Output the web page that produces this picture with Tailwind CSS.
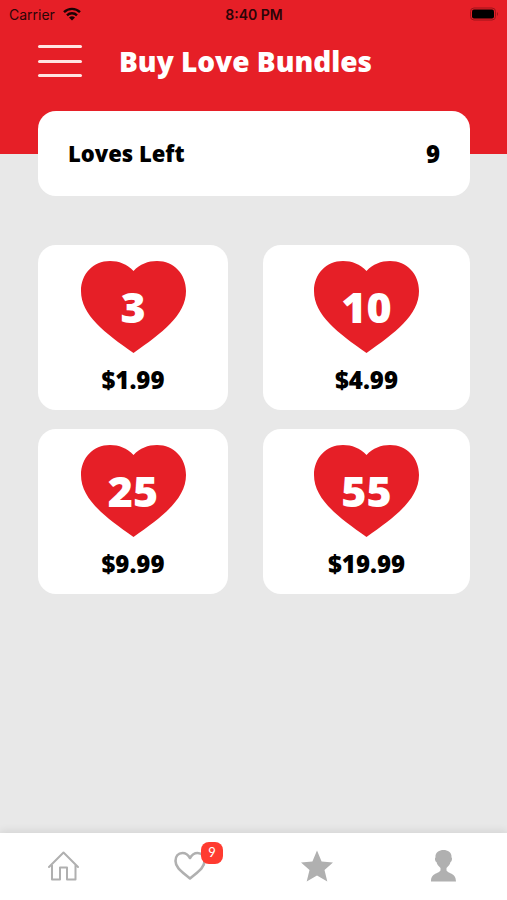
<!DOCTYPE html>
<html lang="en">
<head>
<meta charset="utf-8">
<meta name="viewport" content="width=device-width, initial-scale=1">
<title>Buy Love Bundles</title>
<script src="https://cdn.jsdelivr.net/npm/@tailwindcss/browser@4"></script>
</head>
<body class="flex min-h-screen flex-col bg-[#e8e8e8] font-['Open_Sans',sans-serif] font-extrabold text-black">
  <svg class="hidden" aria-hidden="true">
    <symbol id="heart" viewBox="0 0 105 92">
      <path d="M52.5 10C46 3 38 0 29 0C12 0 0 13 0 30C0 54 24 72 52.5 92C81 72 105 54 105 30C105 13 93 0 76 0C67 0 59 3 52.5 10Z" fill="#e61f27"/>
    </symbol>
  </svg>

  <header class="bg-[#e61f27] pb-[68px]">
    <div class="grid h-7 grid-cols-3 items-center pr-2 pl-[9px] font-['Inter',sans-serif] text-[14px] font-semibold text-[#2a0507]">
      <div class="flex items-center gap-2 font-normal">
        <span>Carrier</span>
        <svg class="h-[14px] w-[18px]" viewBox="0 0 18 14" aria-label="Wi-Fi">
          <path d="M1 5.2C5.5 .8 12.500 .8 17 5.200M4 8.300C6.800 5.600 11.200 5.600 14 8.300" fill="none" stroke="#1a0304" stroke-width="2.400"/>
          <path d="M6 10.500Q9 8 12 10.500L9 13.500Z" fill="#1a0304"/>
        </svg>
      </div>
      <span class="text-center">8:40 PM</span>
      <svg class="h-[14px] w-[30px] justify-self-end" viewBox="0 0 30 14" aria-label="Battery full">
        <rect x="1.500" y="1" width="25" height="12" rx="3.500" fill="none" stroke="#9c151b"/>
        <rect x="3" y="2.500" width="22" height="9" rx="2" fill="#000"/>
        <path d="M28 5Q30 7 28 9Z" fill="#9c151b"/>
      </svg>
    </div>
    <div class="flex items-center gap-[37px] px-[38px] pt-3 pb-1">
      <button class="flex h-8 w-11 flex-col justify-between" aria-label="Menu">
        <span class="h-[3px] w-full rounded-sm bg-[#ffe5e2]"></span>
        <span class="h-[3px] w-full rounded-sm bg-[#ffe5e2]"></span>
        <span class="h-[3px] w-full rounded-sm bg-[#ffe5e2]"></span>
      </button>
      <h1 class="text-[28px] leading-[42px] text-white">Buy Love Bundles</h1>
    </div>
  </header>

  <main class="-mt-[43px] flex-1 pr-[37px] pl-[38px]">
    <section class="flex h-[85px] items-center justify-between rounded-[18px] bg-white px-[30px]">
      <h2 class="text-[22px]">Loves Left</h2>
      <span class="text-[24px]">9</span>
    </section>

    <section class="mt-[49px] grid grid-cols-[190fr_207fr] gap-x-[35px] gap-y-[19px]" aria-label="Bundles">
      <button class="flex flex-col items-center rounded-[18px] bg-white pt-4 pb-[14px] text-[24px] leading-8">
        <span class="grid h-[92px] w-[105px] place-items-center *:col-start-1 *:row-start-1">
          <svg class="size-full"><use href="#heart"/></svg>
          <span class="text-[43px] text-white">3</span>
        </span>
        <span class="mt-[11px]">$1.99</span>
      </button>
      <button class="flex flex-col items-center rounded-[18px] bg-white pt-4 pb-[14px] text-[24px] leading-8">
        <span class="grid h-[92px] w-[105px] place-items-center *:col-start-1 *:row-start-1">
          <svg class="size-full"><use href="#heart"/></svg>
          <span class="text-[43px] text-white">10</span>
        </span>
        <span class="mt-[11px]">$4.99</span>
      </button>
      <button class="flex flex-col items-center rounded-[18px] bg-white pt-4 pb-[14px] text-[24px] leading-8">
        <span class="grid h-[92px] w-[105px] place-items-center *:col-start-1 *:row-start-1">
          <svg class="size-full"><use href="#heart"/></svg>
          <span class="text-[43px] text-white">25</span>
        </span>
        <span class="mt-[11px]">$9.99</span>
      </button>
      <button class="flex flex-col items-center rounded-[18px] bg-white pt-4 pb-[14px] text-[24px] leading-8">
        <span class="grid h-[92px] w-[105px] place-items-center *:col-start-1 *:row-start-1">
          <svg class="size-full"><use href="#heart"/></svg>
          <span class="text-[43px] text-white">55</span>
        </span>
        <span class="mt-[11px]">$19.99</span>
      </button>
    </section>
  </main>

  <nav class="grid h-[67px] grid-cols-4 justify-items-center bg-white pt-[17px] shadow-[0_-2px_8px_rgba(0,0,0,0.09)]" aria-label="Main">
    <a href="#home" aria-label="Home" class="size-8">
      <svg viewBox="0 0 32 32" fill="none" stroke="#b0b0b0" stroke-width="2" stroke-linejoin="round" stroke-linecap="round"><path d="M2 17L16.500 2.500L31 17M5 15V29.500H13V17.500H20V29.500H28.500V15"/></svg>
    </a>
    <a href="#loves" aria-label="Loves" class="relative size-8">
      <svg viewBox="0 0 32 32" fill="none" stroke="#b0b0b0" stroke-width="2.600" stroke-linejoin="round"><path d="M16 8C14 4.500 11.500 3 8.500 3C4 3 1.500 6.500 1.500 11C1.500 18 8.500 22 16 28.500C23.500 22 30.500 18 30.500 11C30.500 6.500 28 3 23.500 3C20.500 3 18 4.500 16 8Z"/></svg>
      <span class="absolute -top-2 left-[27px] flex size-[22px] items-center justify-center rounded-lg bg-[#ff3b30] font-['Lato',sans-serif] text-[13px] font-normal text-white">9</span>
    </a>
    <a href="#favorites" aria-label="Favorites" class="size-8">
      <svg viewBox="0 0 32 32" fill="#b0b0b0"><path d="M16 0.500L20.600 11.500L32 12.500L23.500 20L26.300 31.500L16 25.500L5.700 31.500L8.500 20L0 12.500L11.400 11.500Z"/></svg>
    </a>
    <a href="#profile" aria-label="Profile" class="size-8">
      <svg viewBox="0 0 32 32" fill="#b0b0b0"><path d="M15.500 0C19.500 0 24 2 23.500 7.500C24.500 8 24 11.500 22.500 12C22 14.500 20.500 16 18.500 18V20.500C20.500 24 28 22.500 28 31.500H3C3 22.500 10.500 24 12.500 20.500V18C10.500 16 9 14.500 8.500 12C7 11.500 6.500 8 7.500 7.500C7 2 11.500 0 15.500 0Z"/></svg>
    </a>
  </nav>
</body>
</html>
